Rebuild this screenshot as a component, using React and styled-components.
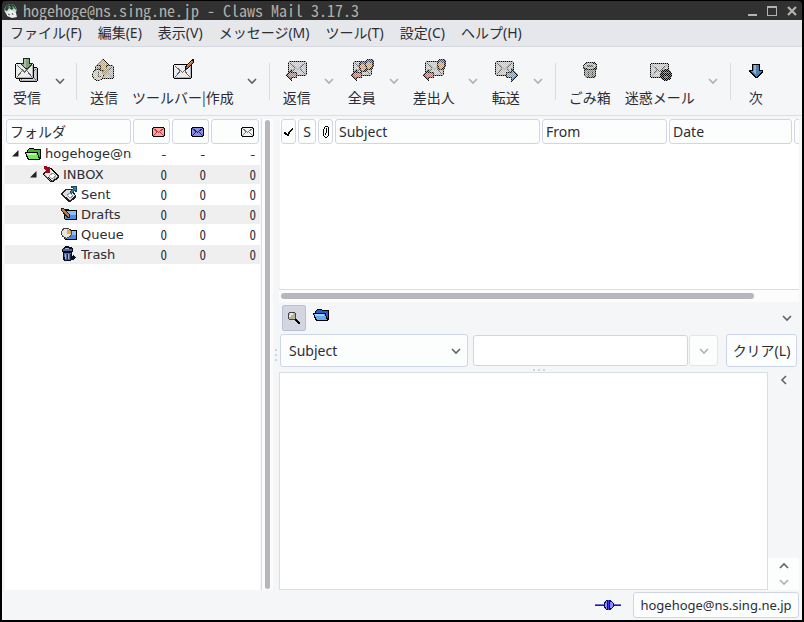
import React, { useId, useState } from 'react';
import styled, { createGlobalStyle } from 'styled-components';

const UI_FONT = '"Noto Sans", "Noto Sans CJK JP", sans-serif';
const TOOL_FONT = '"Noto Sans CJK JP", "Noto Sans", sans-serif';
const TREE_FONT = '"DejaVu Sans", "Noto Sans CJK JP", sans-serif';
const MONO_FONT = '"Noto Sans Mono CJK JP", "Liberation Mono", monospace';

const GlobalStyle = createGlobalStyle`
    * {
        box-sizing: border-box;
    }

    body {
        margin: 0;
        background-color: #000;
        color: #2b2d35;
        font-family: ${UI_FONT};
        font-size: 14px;
        line-height: 20px;
    }

    button, input, select {
        margin: 0;
        padding: 0;
        border: none;
        background: none;
        color: inherit;
        font: inherit;
    }
`;

/* ---------- icons ---------- */

const Svg = styled.svg`
    display: block;
    flex: none;
`;

// insensitive icons are stippled, the way GTK used to do it
function Pix({ w = 16, h = 16, stipple, children }) {
    const id = useId();
    return (
        <Svg width={w} height={h} viewBox={`0 0 ${w} ${h}`} shapeRendering="crispEdges" aria-hidden="true">
            {stipple && (
                <defs>
                    <pattern id={id + 'p'} width="2" height="2" patternUnits="userSpaceOnUse">
                        <path d="M0 0h2v2H0z" fill="#666" />
                        <path d="M0 0h1v1H0zM1 1h1v1H1z" fill="#fff" />
                    </pattern>
                    <mask id={id + 'm'} maskUnits="userSpaceOnUse" x="0" y="0" width={w} height={h}>
                        <rect width={w} height={h} fill={`url(#${id}p)`} />
                    </mask>
                </defs>
            )}
            <g mask={stipple ? `url(#${id}m)` : undefined}>{children}</g>
        </Svg>
    );
}

function Envelope({ x, y, w = 19, h = 15, fill = '#ececec' }) {
    return (
        <g transform={`translate(${x} ${y})`}>
            <path d={`M1 0h${w - 2}v1h1v${h - 2}h-1v1H1v-1H0V1h1z`} fill="#000" />
            <rect x="1" y="1" width={w - 2} height={h - 2} fill={fill} />
            <path d={`M1 ${h - 2}h${w - 2}v1H1zM${w - 2} 2h1v${h - 3}h-1z`} fill="#b4b4b4" />
            <path d={`M2 2L${w / 2} ${h / 2 + 1}L${w - 2} 2M2 ${h - 2}L7 ${h / 2}M${w - 2} ${h - 2}L${w - 7} ${h / 2}`} fill="none" stroke="#666" />
        </g>
    );
}

const ReceiveIcon = () => (
    <Pix w={24} h={24}>
        <Envelope x={4} y={9} w={19} h={15} fill="#d4d4d4" />
        <Envelope x={0} y={5} w={19} h={16} />
        <path d="M8 0h7v5h3v1h-1v1h-1v1h-1v1h-1v1h-1v1h-3v-1h-1V9H8V8H7V7H6V6H5V5h3z" fill="#182818" />
        <path d="M9 1h5v5h2v1h-1v1h-1v1h-1v1h-3V9H9V8H8V7H7V6h2z" fill="#7f9f76" />
        <path d="M9 1h2v8H9z" fill="#a9c0a2" />
    </Pix>
);

const SendIcon = () => (
    <Pix w={24} h={24} stipple>
        <Envelope x={3} y={7} w={19} h={14} fill="#b4b4b4" />
        <path d="M11 1l6 6h-3v5H8V7H5z" fill="#b4a984" stroke="#111" />
        <circle cx="6" cy="17" r="5.5" fill="#c8c3b4" stroke="#111" />
        <path d="M6 13v5h3" fill="none" stroke="#555" />
        <path d="M11 13l3-3 3 3-4 5-3-2z" fill="#a59972" />
    </Pix>
);

const ComposeIcon = () => (
    <Pix w={24} h={24}>
        <Envelope x={2} y={6} w={19} h={15} />
        <path d="M14 12v-3l7-8h2v3l-7 7z" fill="#111" />
        <path d="M15 10l6-7 1 1-6 6z" fill="#c06a2c" />
        <path d="M16 8l5-5" stroke="#e2a06a" />
    </Pix>
);

const ArrowLeft = () => (
    <g>
        <path d="M0 17l7-7v4h5v6H7v4z" fill="#111" />
        <path d="M2 17l4-4v2h5v4H6v2z" fill="#b07870" />
    </g>
);

const Head = ({ x, y }) => (
    <g transform={`translate(${x} ${y})`}>
        <path d="M2 0h5l2 2v5L7 11H2L0 7V2z" fill="#181818" />
        <path d="M2 2h4l1 2v3l-2 3H3L1 6z" fill="#bf9c78" />
        <path d="M2 1h5v3H5V3H2z" fill="#515c8c" />
    </g>
);

const ReplyIcon = () => (
    <Pix w={24} h={24} stipple>
        <Envelope x={3} y={3} fill="#c4c4c4" />
        <ArrowLeft />
    </Pix>
);

const ReplyAllIcon = () => (
    <Pix w={24} h={24} stipple>
        <Envelope x={3} y={3} fill="#c4c4c4" />
        <Head x={9} y={3} />
        <Head x={15} y={1} />
        <ArrowLeft />
    </Pix>
);

const ReplySenderIcon = () => (
    <Pix w={24} h={24} stipple>
        <Envelope x={3} y={3} fill="#c4c4c4" />
        <Head x={15} y={1} />
        <ArrowLeft />
    </Pix>
);

const ForwardIcon = () => (
    <Pix w={24} h={24} stipple>
        <Envelope x={1} y={3} fill="#c4c4c4" />
        <path d="M24 17l-7-7v4h-5v6h5v4z" fill="#111" />
        <path d="M22 17l-4-4v2h-5v4h5v2z" fill="#7c96ae" />
    </Pix>
);

const TrashIcon = () => (
    <Pix w={24} h={24} stipple>
        <path d="M5 7l3-3h8l3 3v4l-1 1v6l-2 2H8l-2-2v-6l-1-1z" fill="#111" />
        <path d="M7 12h10v6l-2 1H9l-2-1z" fill="#8c8c88" />
        <ellipse cx="12" cy="8" rx="6" ry="3" fill="#b4b4ae" />
        <path d="M9 7h6v2H9z" fill="#55554f" />
        <path d="M10 13h1v6h-1zM14 13h1v6h-1z" fill="#444" />
    </Pix>
);

const SpamIcon = () => (
    <Pix w={24} h={24} stipple>
        <Envelope x={2} y={5} fill="#c4c4c4" />
        <circle cx="18" cy="17" r="6" fill="#000" />
        <path d="M15 14h6v1h-6zM16 18h4v2h-4z" fill="#555" />
    </Pix>
);

const NextIcon = () => (
    <Pix w={24} h={24}>
        <path d="M8 6h8v6h3v2l-6 6h-2l-6-6v-2h3z" fill="#000" />
        <path d="M9 7h6v6h3l-6 6-6-6h3z" fill="#4f7fae" />
        <path d="M10 7h2v10l-4-4h2z" fill="#8fb3d6" />
    </Pix>
);

const FolderIcon = ({ back, front, light }) => (
    <Pix>
        <path d="M2 4l2-2h4l1 1h6l1 1v9l-2 1H3l-3-7V6h2z" fill="#000" />
        <path d="M3 4l2-1h3l1 1h6v8l-1-1-1-5H3z" fill={back} />
        <path d="M1 7h11l2 6H4z" fill={front} />
        <path d="M2 7h9v2H2z" fill={light} />
    </Pix>
);

const InboxIcon = () => (
    <Pix>
        <path d="M0 7l6-5h2l8 8v2l-6 4H8L0 9z" fill="#111" />
        <path d="M1 8l6-5 8 7-6 4z" fill="#ececec" />
        <path d="M9 14v1l6-4v-1zM1 8v1l7 6v-1z" fill="#999" />
        <path d="M6 10l4-3 3 3-4 3z" fill="#fff" stroke="#999" />
        <path d="M1 0h2l2 2V1h2v6H2V5h1L1 2z" fill="#9b0a17" />
    </Pix>
);

const SentIcon = () => (
    <Pix>
        <path d="M0 7l5-4h6l4 7v2l-6 4H7L0 9z" fill="#222" />
        <path d="M1 8l5-4h4l4 6-5 4z" fill="#dedede" />
        <path d="M6 9l3-2 3 3-3 2z" fill="#fff" stroke="#999" />
        <path d="M10 0h6v6h-2V4l-4 4-2-2 4-4h-2z" fill="#174d66" />
        <path d="M12 1h3v3h-1V3l-4 4-1-1 4-4h-1z" fill="#2e7e9c" />
    </Pix>
);

const BlueFolder = () => (
    <g>
        <path d="M2 3h5l1 1h7l1 1v8l-1 1H4l-1-1z" fill="#000" />
        <path d="M4 5h11v8H4z" fill="#4a8ee8" />
        <path d="M5 5h10v4H5z" fill="#8abef8" />
    </g>
);

const DraftsIcon = () => (
    <Pix>
        <BlueFolder />
        <path d="M0 2h3l6 7v3H6L0 4z" fill="#222" />
        <path d="M1 3h2l5 6v2H7L1 4z" fill="#b08050" />
    </Pix>
);

const QueueIcon = () => (
    <Pix>
        <BlueFolder />
        <circle cx="5.5" cy="7" r="5.5" fill="#444" />
        <circle cx="5.5" cy="7" r="4.5" fill="#e9e6de" />
        <path d="M6 3l4 2v3H6z" fill="#e9a84a" />
    </Pix>
);

const TreeTrashIcon = () => (
    <Pix>
        <path d="M1 3l2-2h1V0h4v1h2l2 2v3h-1v4h1v-1l3 2v1l-3 2h-2l-1 1H4l-2-1V6H1z" fill="#0b0d1c" />
        <path d="M2 3h9v2H2zM3 7h7v7H4z" fill="#54689f" />
        <path d="M4 2h4v1H4zM4 8h1v5H4zM7 8h1v5H7z" fill="#a9b7dc" />
        <path d="M6 8h1v6H6zM9 8h1v6H9z" fill="#1c2547" />
    </Pix>
);

const ColumnMail = ({ fill, line }) => (
    <Pix w={13} h={10}>
        <path d="M1 0h11v1h1v8h-1v1H1V9H0V1h1z" fill="#000" />
        <path d="M1 1h11v8H1z" fill={fill} />
        <path d="M1 1l5.500 4.500L12 1M1 9l4-4M12 9L8 5" fill="none" stroke={line} />
    </Pix>
);

const CheckIcon = () => (
    <Pix w={9} h={10}>
        <path d="M0 5h2v1h1v1h1V5h1V4h1V3h1V2h1V1h1v2H8v1H7v1H6v2H5v2H3V8H1V7H0z" fill="#000" />
    </Pix>
);

const ClipIcon = () => (
    <Pix w={6} h={12}>
        <path d="M2 0h3v1H2zM1 1h1v2H1zM5 1h1v9H5zM0 3h1v7H0zM1 10h1v1H1zM2 11h2v1H2zM4 10h1v1H4zM3 2h1v5H3zM2 7h1v2H2z" fill="#000" />
    </Pix>
);

const SearchIcon = () => (
    <Pix w={14} h={14}>
        <path d="M7 7l6 6" stroke="#000" strokeWidth="2" />
        <circle cx="5" cy="5" r="4.500" fill="#444" />
        <circle cx="5" cy="5" r="3.500" fill="#b7b49c" />
        <path d="M3 2h3v2H4v2H2V4h1z" fill="#ebe9dc" />
    </Pix>
);

const OnlineIcon = () => (
    <Pix w={26} h={12}>
        <path d="M0 5h26v2H0z" fill="#23235e" />
        <path d="M0 5h9v1H0zM17 5h9v1h-9z" fill="#7070d0" />
        <path d="M10 2l1-1h4l2 1 2 3v2l-2 3-2 1h-4l-1-1-1-3V5z" fill="#10104c" />
        <path d="M11 2h1v8h-1zM10 4h2v4h-2zM15 3h1l2 2v2l-2 2h-1z" fill="#9090f4" />
        <path d="M13 1h1v10h-1z" fill="#3a3aff" />
    </Pix>
);

const AppIcon = () => (
    <Svg width="14" height="16" viewBox="0 0 14 16" aria-hidden="true">
        <circle cx="6.500" cy="7" r="6" fill="#c6dcdc" />
        <path d="M1 7q0-6 6-6 5 1 5 6l-2-2-2 2-3-2-2 3z" fill="#25432e" />
        <path d="M3 4l3-1 1 2zM8 3l3 2-2 1z" fill="#7fa778" />
        <path d="M3 9l4-2 5 3 1 4-5 1-5-2z" fill="#eee" />
        <path d="M4 11l2 1M8 10l1 2" stroke="#555" />
    </Svg>
);

const CHEVRONS = {
    down: 'M1 3l4 4 4-4',
    up: 'M1 7l4-4 4 4',
    left: 'M7 1L3 5l4 4',
};

const Chevron = ({ dir = 'down', faded }) => (
    <Svg width="10" height="10" viewBox="0 0 10 10" aria-hidden="true">
        <path d={CHEVRONS[dir]} fill="none" stroke={faded ? '#aeb0b6' : '#5f626c'} strokeWidth="1.600" />
    </Svg>
);

/* ---------- window ---------- */

const Window = styled.div`
    display: flex;
    flex-direction: column;
    min-height: 100vh;
    padding: 1px 2px 2px;
    background-color: #000;
`;

const TitleBar = styled.header`
    display: flex;
    align-items: center;
    height: 19px;
    padding: 0 0 0 2px;
    border-radius: 4px 4px 0 0;
    background-color: #313131;
    color: #b0b0aa;
`;

const Title = styled.h1`
    flex: 1;
    margin: 0 0 0 5px;
    white-space: nowrap;
    font: 400 16px/19px ${MONO_FONT};
`;

const TitleButton = styled.button`
    display: flex;
    align-items: center;
    justify-content: center;
    width: 20px;
    height: 19px;
`;

const MenuBar = styled.nav`
    display: flex;
    height: 27px;
    border-bottom: 1px solid #d5d8df;
    background-color: #e6e7eb;
`;

const MenuItem = styled.button`
    padding: 0 8px;
    white-space: nowrap;
`;

const Toolbar = styled.div`
    display: flex;
    height: 69px;
    padding: 0 4px;
    border-bottom: 1px solid #dcdee3;
    background-color: #f5f6f8;
`;

const ToolButton = styled.button`
    display: flex;
    flex-direction: column;
    align-items: center;
    gap: 5px;
    min-width: 38px;
    padding: 11px 7px 0;
    white-space: nowrap;
    font-family: ${TOOL_FONT};
`;

const ToolArrow = styled.button`
    display: flex;
    align-items: center;
    justify-content: center;
    width: 23px;
`;

const ToolSeparator = styled.span`
    width: 1px;
    height: 37px;
    margin: 16px 6px 16px 5px;
    background-color: #d9dbe0;
`;

const Main = styled.main`
    display: flex;
    flex: 1;
    padding: 3px 3px 0;
    background-color: #f5f6f8;
`;

/* ---------- folder tree ---------- */

const FolderPane = styled.section`
    width: 256px;
    background-color: #fff;
    border-right: 1px solid #f5f6f8;
`;

const Scrollbar = styled.div`
    display: flex;
    width: 12px;
    padding: 1px 3px;
    border-left: 1px solid #dcdde2;
    background-color: #fcfcfd;
`;

const HScrollbar = styled.div`
    padding: 3px 45px 3px 2px;
    border-top: 1px solid #dadde2;
    background-color: #fcfcfd;
`;

const Thumb = styled.div`
    width: ${props => props.$horizontal ? 'auto' : '6px'};
    height: ${props => props.$horizontal ? '6px' : 'auto'};
    border-radius: 3px;
    background-color: #b6b6bb;
`;

const Table = styled.table`
    width: 100%;
    table-layout: fixed;
    border-collapse: collapse;

    th {
        padding: 0 1px;
        font-weight: 400;
    }
`;

const HEADER_PADDING = { center: 0, 'flex-end': 4 };

const HeaderButton = styled.button`
    display: flex;
    align-items: center;
    justify-content: ${props => props.$align || 'flex-start'};
    width: 100%;
    min-width: 12px;
    height: 25px;
    padding: 0 ${props => HEADER_PADDING[props.$align] ?? 3}px;
    border: 1px solid #d0d6e6;
    border-radius: 3px;
    background-color: #fcfdfd;
`;

const FolderRow = styled.tr`
    height: 20px;
    border-bottom: 1px solid #fff;
    background-color: ${props => props.$odd ? '#efefef' : '#fff'};

    td {
        padding: 0;
        white-space: nowrap;
        line-height: 19px;
    }
`;

const FolderName = styled.div`
    display: flex;
    align-items: center;
    gap: 4px;
    padding-left: ${props => 7 + props.$level * 18}px;
    font-family: ${TREE_FONT};
    font-size: 13px;

    span {
        flex: 1;
        min-width: 0;
        overflow: hidden;
    }
`;

const Expander = styled.button`
    display: flex;
    flex: none;
    width: 9px;
`;

const Count = styled.td`
    && {
        padding-right: 4px;
    }
    text-align: right;
    font-family: ${MONO_FONT};
    font-size: 13px;
    font-variant-numeric: slashed-zero;
`;

/* ---------- right side ---------- */

const Handle = styled.div`
    display: flex;
    flex-direction: ${props => props.$horizontal ? 'row' : 'column'};
    align-items: center;
    justify-content: center;
    gap: 3px;
    width: ${props => props.$horizontal ? 'auto' : '6px'};
    height: ${props => props.$horizontal ? '5px' : 'auto'};

    i {
        width: 2px;
        height: 2px;
        background-color: #cfd3e2;
    }
`;

const Content = styled.div`
    display: flex;
    flex: 1;
    flex-direction: column;
    min-width: 0;
`;

const MessageList = styled.section`
    flex: 0 0 170px;
    overflow: hidden;
    margin-left: 1px;
    background-color: #fff;
`;

const SearchTools = styled.div`
    display: flex;
    align-items: center;
    height: 32px;
    padding: 0 7px 0 3px;
`;

const ToggleButton = styled.button`
    display: flex;
    align-items: center;
    justify-content: center;
    width: 24px;
    height: 26px;
    margin-right: 7px;
    border: 1px solid ${props => props.$on ? '#b6c1d8' : 'transparent'};
    border-radius: 2px;
    background-color: ${props => props.$on ? '#d3d6e1' : 'transparent'};
`;

const FolderToggle = styled.button`
    padding-bottom: 6px;
    margin-right: auto;
`;

const SearchRow = styled.form`
    display: flex;
    align-items: center;
    height: 33px;
    padding: 0 2px 0 1px;
`;

const SelectBox = styled.span`
    display: grid;
    grid-template-columns: 1fr 16px;
    align-items: center;
    flex: 0 1 188px;
    height: 33px;
    margin-right: 5px;
    border: 1px solid #d0d6e6;
    border-radius: 3px;
    background-color: #fcfdfd;

    select {
        grid-area: 1 / 1 / 2 / 3;
        height: 100%;
        padding-left: 8px;
        appearance: none;
        outline: none;
    }

    svg {
        grid-area: 1 / 2;
        pointer-events: none;
    }
`;

const SearchInput = styled.input`
    flex: 1;
    min-width: 0;
    height: 31px;
    padding: 0 8px;
    border: 1px solid #ccd5e8;
    border-radius: 3px;
    background-color: #fff;
`;

const BoxButton = styled.button`
    display: flex;
    align-items: center;
    justify-content: center;
    height: ${props => props.$small ? 31 : 33}px;
    width: ${props => props.$small ? '29px' : 'auto'};
    min-width: ${props => props.$small ? 0 : 71}px;
    margin-left: ${props => props.$small ? 1 : 8}px;
    border: 1px solid ${props => props.$small ? '#e2e5ee' : '#ccd5e8'};
    border-radius: 3px;
    background-color: #fcfdfd;
    white-space: nowrap;
`;

const MessageArea = styled.div`
    display: flex;
    flex: 1;
`;

const MessageView = styled.article`
    flex: 1;
    border: 1px solid #dadde2;
    background-color: #fff;
`;

const SideBar = styled.div`
    display: flex;
    flex-direction: column;
    align-items: center;
    justify-content: space-between;
    width: 31px;
    padding-top: 3px;
`;

const Stepper = styled.div`
    display: flex;
    flex-direction: column;
    align-items: center;
    justify-content: space-around;
    width: 100%;
    height: 32px;
    background-color: #fcfdfd;
`;

const StatusBar = styled.footer`
    display: flex;
    align-items: center;
    justify-content: flex-end;
    gap: 12px;
    height: 30px;
    padding: 0 3px 0 0;
    background-color: #f5f6f8;
`;

const AccountButton = styled.button`
    min-width: 166px;
    height: 26px;
    border: 1px solid #d0d6e6;
    border-radius: 3px;
    background-color: #fcfdfd;
    font-size: 13px;
`;

const MENUS = ['ファイル(F)', '編集(E)', '表示(V)', 'メッセージ(M)', 'ツール(T)', '設定(C)', 'ヘルプ(H)'];

const TOOLS = [
    { label: '受信', icon: ReceiveIcon, arrow: 'on', end: true },
    { label: '送信', icon: SendIcon },
    { label: 'ツールバー|作成', icon: ComposeIcon, arrow: 'on', end: true },
    { label: '返信', icon: ReplyIcon, arrow: 'off' },
    { label: '全員', icon: ReplyAllIcon, arrow: 'off' },
    { label: '差出人', icon: ReplySenderIcon, arrow: 'off' },
    { label: '転送', icon: ForwardIcon, arrow: 'off', end: true },
    { label: 'ごみ箱', icon: TrashIcon },
    { label: '迷惑メール', icon: SpamIcon, arrow: 'off', end: true },
    { label: '次', icon: NextIcon },
];

const GreenFolder = () => <FolderIcon back="#43b02e" front="#76ea5c" light="#b2ff9c" />;

const FOLDERS = [
    { name: 'hogehoge@ns.sing.ne.jp', level: 0, icon: GreenFolder, open: true, counts: ['-', '-', '-'] },
    { name: 'INBOX', level: 1, icon: InboxIcon, open: true, counts: [0, 0, 0] },
    { name: 'Sent', level: 2, icon: SentIcon, counts: [0, 0, 0] },
    { name: 'Drafts', level: 2, icon: DraftsIcon, counts: [0, 0, 0] },
    { name: 'Queue', level: 2, icon: QueueIcon, counts: [0, 0, 0] },
    { name: 'Trash', level: 2, icon: TreeTrashIcon, counts: [0, 0, 0] },
];

function FolderTree() {
    return (
        <FolderPane>
            <Table>
                <colgroup>
                    <col />
                    <col width="39" />
                    <col width="39" />
                    <col width="50" />
                </colgroup>
                <thead>
                    <tr>
                        <th><HeaderButton>フォルダ</HeaderButton></th>
                        <th><HeaderButton $align="flex-end" aria-label="新着"><ColumnMail fill="#f9a8a4" line="#c63434" /></HeaderButton></th>
                        <th><HeaderButton $align="flex-end" aria-label="未読"><ColumnMail fill="#8f8fe0" line="#1c1c70" /></HeaderButton></th>
                        <th><HeaderButton $align="flex-end" aria-label="合計"><ColumnMail fill="#f2f2f0" line="#777" /></HeaderButton></th>
                    </tr>
                </thead>
                <tbody>
                    {FOLDERS.map((folder, i) => (
                        <FolderRow key={folder.name} $odd={i % 2 === 1}>
                            <td>
                                <FolderName $level={folder.level}>
                                    <Expander aria-label={folder.name} disabled={!folder.open}>
                                        {folder.open && (
                                            <Svg width="7" height="7" viewBox="0 0 7 7"><path d="M6.500 0v6.500H0z" fill="#222" /></Svg>
                                        )}
                                    </Expander>
                                    <folder.icon />
                                    <span>{folder.name}</span>
                                </FolderName>
                            </td>
                            {folder.counts.map((count, n) => <Count key={n}>{count}</Count>)}
                        </FolderRow>
                    ))}
                </tbody>
            </Table>
        </FolderPane>
    );
}

function QuickSearch() {
    const [on, setOn] = useState(true);
    const [text, setText] = useState('');
    return (
        <>
            <SearchTools>
                <ToggleButton $on={on} aria-label="検索" aria-pressed={on} onClick={() => setOn(!on)}><SearchIcon /></ToggleButton>
                <FolderToggle aria-label="フォルダ"><FolderIcon back="#1f5fd0" front="#6aaaf5" light="#a6d2ff" /></FolderToggle>
                <Chevron />
            </SearchTools>
            <SearchRow onSubmit={e => e.preventDefault()}>
                <SelectBox>
                    <select aria-label="検索対象" defaultValue="Subject">
                        <option>Subject</option>
                        <option>From</option>
                    </select>
                    <Chevron />
                </SelectBox>
                <SearchInput aria-label="検索文字列" value={text} onChange={e => setText(e.target.value)} />
                <BoxButton type="button" $small aria-label="履歴"><Chevron faded /></BoxButton>
                <BoxButton type="button" onClick={() => setText('')}>クリア(L)</BoxButton>
            </SearchRow>
        </>
    );
}

export default function App() {
    return (
        <Window>
            <GlobalStyle />
            <TitleBar>
                <AppIcon />
                <Title>hogehoge@ns.sing.ne.jp - Claws Mail 3.17.3</Title>
                <TitleButton aria-label="最小化">
                    <Pix w={10} h={10}><path d="M1 8h9v2H1z" fill="#b4b4ae" /></Pix>
                </TitleButton>
                <TitleButton aria-label="最大化">
                    <Pix w={10} h={10}><path d="M0 0h10v10H0zM1 2v7h8V2z" fill="#b4b4ae" fillRule="evenodd" /></Pix>
                </TitleButton>
                <TitleButton aria-label="閉じる">
                    <Svg width="10" height="10" viewBox="0 0 10 10"><path d="M1 1l8 8M9 1L1 9" stroke="#b4b4ae" strokeWidth="2.200" /></Svg>
                </TitleButton>
            </TitleBar>
            <MenuBar>
                {MENUS.map(menu => <MenuItem key={menu}>{menu}</MenuItem>)}
            </MenuBar>
            <Toolbar role="toolbar">
                {TOOLS.map(({ label, icon: Icon, arrow, end }) => (
                    <React.Fragment key={label}>
                        <ToolButton><Icon />{label}</ToolButton>
                        {arrow && <ToolArrow aria-label={label + ' メニュー'}><Chevron faded={arrow === 'off'} /></ToolArrow>}
                        {end && <ToolSeparator />}
                    </React.Fragment>
                ))}
            </Toolbar>
            <Main>
                <FolderTree />
                <Scrollbar><Thumb /></Scrollbar>
                <Handle><i /><i /><i /></Handle>
                <Content>
                    <MessageList>
                        <Table>
                            <colgroup>
                                <col width="17" />
                                <col width="20" />
                                <col width="17" />
                                <col />
                                <col width="127" />
                                <col width="125" />
                                <col width="6" />
                            </colgroup>
                            <thead>
                                <tr>
                                    <th><HeaderButton $align="center" aria-label="マーク"><CheckIcon /></HeaderButton></th>
                                    <th><HeaderButton $align="center">S</HeaderButton></th>
                                    <th><HeaderButton $align="center" aria-label="添付"><ClipIcon /></HeaderButton></th>
                                    <th><HeaderButton>Subject</HeaderButton></th>
                                    <th><HeaderButton>From</HeaderButton></th>
                                    <th><HeaderButton>Date</HeaderButton></th>
                                    <th><HeaderButton aria-label="サイズ" /></th>
                                </tr>
                            </thead>
                        </Table>
                    </MessageList>
                    <HScrollbar><Thumb $horizontal /></HScrollbar>
                    <QuickSearch />
                    <Handle $horizontal><i /><i /><i /></Handle>
                    <MessageArea>
                        <MessageView />
                        <SideBar>
                            <button aria-label="添付を表示"><Chevron dir="left" /></button>
                            <Stepper>
                                <button aria-label="前へ"><Chevron dir="up" /></button>
                                <button aria-label="次へ"><Chevron faded /></button>
                            </Stepper>
                        </SideBar>
                    </MessageArea>
                </Content>
            </Main>
            <StatusBar>
                <OnlineIcon />
                <AccountButton>hogehoge@ns.sing.ne.jp</AccountButton>
            </StatusBar>
        </Window>
    );
}
